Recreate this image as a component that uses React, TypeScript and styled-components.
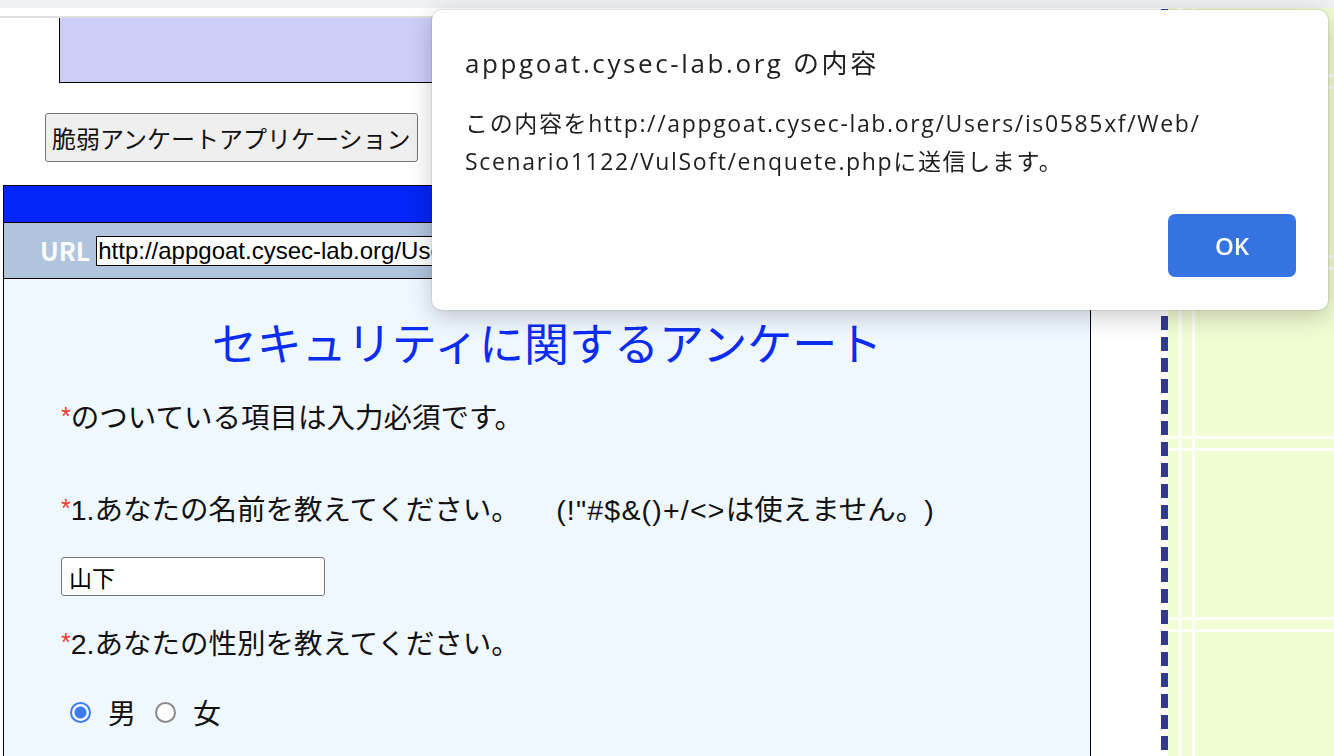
import React from 'react';
import styled, { createGlobalStyle } from 'styled-components';

const GlobalStyle = createGlobalStyle`
html, body {
  margin: 0;
  padding: 0;
  background: #ffffff;
  overflow: hidden;
}
body {
  font-family: "Liberation Sans", "Noto Sans CJK JP", sans-serif;
  color: #111;
}
`;

const Page = styled.div`
display: flex;
flex-direction: column;
height: 756px;
width: 1334px;
`;

const TopStrip = styled.div`
height: 8px;
background: #f0f1f3;
flex: none;
`;

const Body = styled.div`
display: flex;
flex: 1;
min-height: 0;
`;

const LeftColumn = styled.div`
width: 1161px;
flex: none;
background: #ffffff;
padding-top: 8px;
box-sizing: border-box;
`;

const Frame = styled.div`
border-top: 2px solid #dedede;
`;

const Banner = styled.div`
margin-left: 59px;
width: 980px;
height: 65px;
box-sizing: border-box;
background: #cdcef8;
border-left: 1px solid #000;
border-bottom: 1px solid #000;
`;

const AppButton = styled.button`
display: block;
margin: 30px 0 0 45px;
height: 49px;
padding: 0 6px;
background: #efefef;
border: 1px solid #767676;
border-radius: 3px;
font-family: "Noto Sans CJK JP", sans-serif;
font-size: 24px;
line-height: 1;
color: #111;
`;

const Panel = styled.div`
margin: 23px 0 0 3px;
width: 1088px;
box-sizing: border-box;
border: 1px solid #000;
border-bottom: none;
`;

const HeaderBar = styled.div`
height: 36px;
background: #0325f5;
border-bottom: 1px solid #000;
`;

const UrlRow = styled.div`
display: flex;
align-items: center;
gap: 6px;
height: 55px;
padding-left: 36px;
background: #b0c4de;
border-bottom: 1px solid #000;
`;

const UrlLabel = styled.span`
font-family: "Noto Sans CJK JP", sans-serif;
font-weight: 700;
font-size: 25px;
color: #fbfbfb;
line-height: 1;
`;

const UrlInput = styled.input`
width: 760px;
height: 30px;
box-sizing: border-box;
border: 1px solid #000;
border-radius: 0;
padding: 0 1px;
background: #fff;
font-family: "Liberation Sans", sans-serif;
font-size: 24px;
color: #000;
outline: none;
`;

const Content = styled.div`
background: #f0f8ff;
padding-top: 36px;
height: 480px;
`;

const Title = styled.h1`
margin: 0;
text-align: center;
font-family: "Noto Sans CJK JP", sans-serif;
font-weight: 400;
font-size: 45px;
line-height: 53px;
color: #0b2cf4;
`;

const Questions = styled.div`
padding-left: 57px;
`;

const Line = styled.p<{ $top: number }>`
margin: ${p => p.$top}px 0 0;
font-size: 28.5px;
line-height: 40px;
color: #111;
white-space: pre;
text-spacing-trim: space-all;
`;

const Req = styled.span`
color: #e93a2b;
font-size: 25px;
vertical-align: 3px;
`;

const Latin = styled.span`
letter-spacing: 1.2px;
`;

const NameInput = styled.input`
display: block;
margin-top: 27px;
width: 264px;
height: 39px;
box-sizing: border-box;
border: 1px solid #767676;
border-radius: 3px;
padding: 0 7px;
background: #fff;
font-family: "Noto Sans CJK JP", sans-serif;
font-size: 23px;
color: #000;
outline: none;
`;

const RadioRow = styled.div`
display: flex;
align-items: center;
gap: 19px;
margin-top: 28px;
padding-left: 9px;
height: 40px;
`;

const RadioLabel = styled.label`
display: flex;
align-items: center;
gap: 17px;
font-family: "Noto Sans CJK JP", sans-serif;
font-size: 28px;
line-height: 40px;
`;

const Radio = styled.input`
appearance: none;
margin: 0;
width: 21px;
height: 21px;
border-radius: 50%;
box-sizing: border-box;
border: 2px solid #8a8a8a;
background: #fff;
&:checked {
  border: 2px solid #3b7cf2;
  background: radial-gradient(circle, #3b7cf2 0 5.5px, #fff 6.5px);
}
`;

const DashLine = styled.div`
width: 7px;
flex: none;
background: repeating-linear-gradient(to bottom, #333a8e 0 14px, #ffffff 14px 21px);
background-position: 0 14px;
`;

const GreenArea = styled.div`
flex: 1;
background-color: #f0fcd2;
background-image:
  linear-gradient(to right, transparent 10px, #fdfff6 10px 14px, transparent 14px 24px, #fdfff6 24px 27px, transparent 27px),
  linear-gradient(to bottom, transparent 66px, #fdfff6 66px 69px, transparent 69px 78px, #fdfff6 78px 81px, transparent 81px);
background-size: 181px 181px;
`;

const Dialog = styled.div`
position: fixed;
top: 10px;
left: 432px;
width: 896px;
height: 300px;
box-sizing: border-box;
background: #fff;
border-radius: 10px;
box-shadow: 0 6px 24px rgba(0, 0, 0, 0.22), 0 0 0 1px rgba(0, 0, 0, 0.07);
padding: 35px 32px 33px 33px;
display: flex;
flex-direction: column;
font-family: "Open Sans", "Noto Sans CJK JP", sans-serif;
color: #1f1f1f;
`;

const DialogTitle = styled.div`
font-size: 26px;
line-height: 36px;
letter-spacing: 2.6px;
`;

const DialogMessage = styled.div`
margin-top: 23px;
font-size: 23px;
line-height: 38px;
letter-spacing: 1.65px;
`;

const DialogActions = styled.div`
display: flex;
justify-content: flex-end;
margin-top: auto;
`;

const OkButton = styled.button`
width: 128px;
height: 63px;
border: none;
border-radius: 7px;
background: #3574e0;
color: #fff;
font-family: "Open Sans", sans-serif;
font-weight: 600;
font-size: 24px;
`;

function App() {
  return (
    <>
      <GlobalStyle />
      <Page>
        <TopStrip />
        <Body>
          <LeftColumn>
            <Frame>
              <Banner />
              <AppButton>脆弱アンケートアプリケーション</AppButton>
              <Panel>
                <HeaderBar />
                <UrlRow>
                  <UrlLabel>URL</UrlLabel>
                  <UrlInput readOnly value="http://appgoat.cysec-lab.org/Users/is0585xf/Web/Scenario1122/VulSoft/enquete.php" />
                </UrlRow>
                <Content>
                  <Title>セキュリティに関するアンケート</Title>
                  <Questions>
                    <Line $top={28}><Req>*</Req>のついている項目は入力必須です。</Line>
                    <Line $top={50}><Req>*</Req>1.あなたの名前を教えてください。　 <Latin>(!"#$&amp;()+/&lt;&gt;</Latin>は使えません。)</Line>
                    <NameInput readOnly value="山下" />
                    <Line $top={26}><Req>*</Req>2.あなたの性別を教えてください。</Line>
                    <RadioRow>
                      <RadioLabel><Radio type="radio" name="sex" defaultChecked />男</RadioLabel>
                      <RadioLabel><Radio type="radio" name="sex" />女</RadioLabel>
                    </RadioRow>
                  </Questions>
                </Content>
              </Panel>
            </Frame>
          </LeftColumn>
          <DashLine />
          <GreenArea />
        </Body>
      </Page>
      <Dialog>
        <DialogTitle>appgoat.cysec-lab.org の内容</DialogTitle>
        <DialogMessage>
          この内容をhttp://appgoat.cysec-lab.org/Users/is0585xf/Web/<br />
          Scenario1122/VulSoft/enquete.phpに送信します。
        </DialogMessage>
        <DialogActions>
          <OkButton>OK</OkButton>
        </DialogActions>
      </Dialog>
    </>
  );
}

export default App;
